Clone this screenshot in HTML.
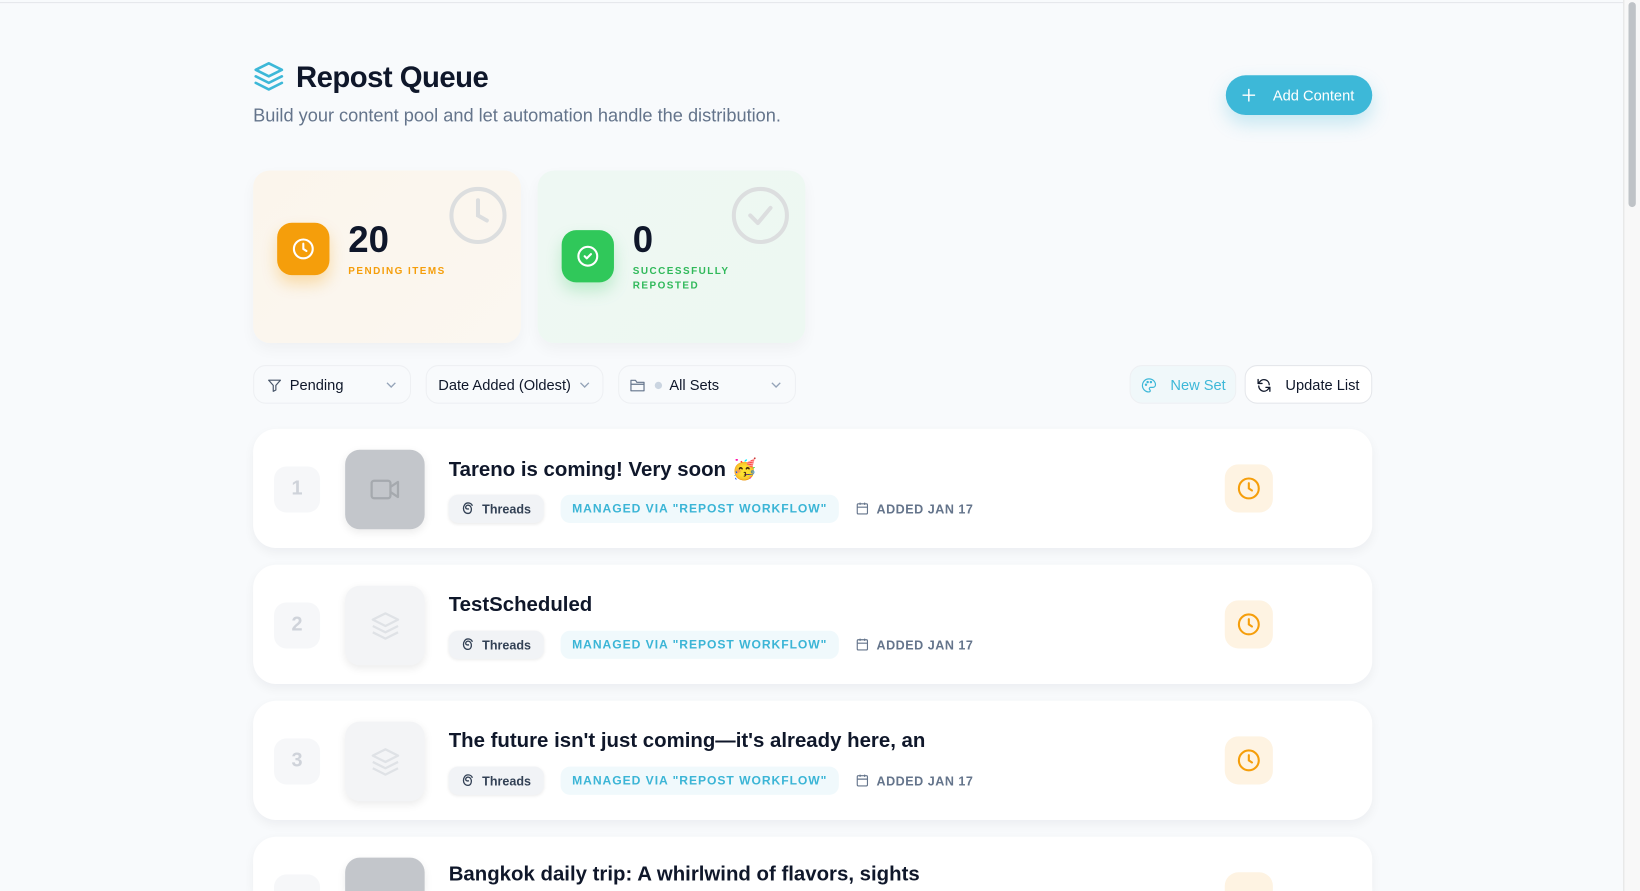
<!DOCTYPE html>
<html><head><meta charset="utf-8">
<style>
*{box-sizing:border-box;margin:0;padding:0}
html,body{width:1640px;height:891px;overflow:hidden;background:#f8fafc;font-family:"Liberation Sans",Arial,sans-serif;color:#0f172a}
#w{position:absolute;left:0;top:0;width:1568px;height:852px;overflow:hidden;transform:scale(1.045918);transform-origin:0 0;background:#f8fafc}
.abs{position:absolute}
.topline{left:0;top:2px;width:1552px;height:1px;background:#e5e7eb}
.sb{left:1552px;top:0;width:16px;height:852px;background:#f8f8f8;border-left:1px solid #e3e3e3}
.sb i{position:absolute;left:4px;top:2px;width:7px;height:196px;border-radius:4px;background:#bfc3c7}
h1{position:absolute;left:283px;top:58px;font-size:28px;font-weight:700;letter-spacing:-0.5px;color:#0f172a}
.sub{left:242px;top:100px;font-size:17.4px;color:#64748b}
.add{left:1172px;top:72px;width:140px;height:38px;border-radius:19px;background:#3db8d8;color:#fff;font-size:14px;box-shadow:0 8px 18px rgba(61,184,216,.28)}
.add span{position:absolute;left:45px;top:11px}
.card{top:163px;width:256px;height:165px;border-radius:16px}
.c1{left:242px;background:linear-gradient(135deg,#fbf5ec,#fbf7f0);box-shadow:0 6px 14px rgba(0,0,0,.04)}
.c2{left:514px;background:linear-gradient(135deg,#eef8f3,#edf8f2);box-shadow:0 6px 14px rgba(0,0,0,.04)}
.ib{width:50px;height:50px;border-radius:14px}
.num{font-size:35px;font-weight:700;color:#0f172a}
.lab{font-size:9.5px;font-weight:700;letter-spacing:1.4px;line-height:14px}
.f{top:349px;height:37px;border-radius:12px;border:1px solid #eef0f3;background:#f8fafc;font-size:14px;color:#0f172a}
.f span{position:absolute;top:10px}
.row{left:242px;width:1070px;height:114px;border-radius:22px;background:#fff;box-shadow:0 4px 10px rgba(15,23,42,.05)}
.no{left:20px;top:36px;width:44px;height:44px;border-radius:12px;background:#f6f7f9;color:#cfd3da;font-size:19px;font-weight:700;text-align:center;line-height:44px}
.th{left:88px;top:20px;width:76px;height:76px;border-radius:14px;box-shadow:0 3px 8px rgba(0,0,0,.08)}
.tt{left:187px;top:27px;font-size:19.5px;font-weight:700;color:#0f172a;white-space:nowrap}
.tg{top:63px;height:27px;border-radius:9px;font-size:12px;font-weight:700;white-space:nowrap}
.t1{left:187px;width:91px;background:#f1f3f6;color:#334155;box-shadow:0 1px 3px rgba(0,0,0,.08)}
.t2{left:294px;width:266px;background:#f0f9fc;color:#3bb5d6;letter-spacing:0.9px;font-size:11.6px}
.t3{left:576px;color:#64748b;letter-spacing:0.5px}
.clk{left:929px;top:34px;width:46px;height:46px;border-radius:13px;background:#fef3e2}
</style></head><body><div id="w">
<div class="abs topline"></div>
<div class="abs sb"><i></i></div>

<svg class="abs" style="left:242px;top:58px" width="30" height="30" viewBox="0 0 24 24" fill="none" stroke="#3db8d8" stroke-width="2" stroke-linejoin="round" stroke-linecap="round"><path d="M12 2 2 7l10 5 10-5-10-5z"/><path d="m2 17 10 5 10-5"/><path d="m2 12 10 5 10-5"/></svg>
<h1>Repost Queue</h1>
<div class="abs sub">Build your content pool and let automation handle the distribution.</div>

<div class="abs add"><svg class="abs" style="left:15px;top:12px" width="14" height="14" viewBox="0 0 14 14" stroke="#fff" stroke-width="1.4"><path d="M7 1v12M1 7h12"/></svg><span>Add Content</span></div>

<div class="abs card c1">
 <svg class="abs" style="left:186px;top:14px" width="58" height="58" viewBox="0 0 24 24" fill="none" stroke="#dcdedf" stroke-width="1.6" stroke-linecap="round"><circle cx="12" cy="12" r="10.5"/><path d="M12 6v6l3.5 2"/></svg>
 <div class="abs ib" style="left:23px;top:50px;background:#f59e0b;box-shadow:0 8px 14px rgba(245,158,11,.3)"><svg class="abs" style="left:13px;top:13px" width="24" height="24" viewBox="0 0 24 24" fill="none" stroke="#fff" stroke-width="2" stroke-linecap="round"><circle cx="12" cy="12" r="9"/><path d="M12 7v5l3 2"/></svg></div>
 <div class="abs num" style="left:91px;top:47px">20</div>
 <div class="abs lab" style="left:91px;top:90px;color:#f59e0b">PENDING ITEMS</div>
</div>
<div class="abs card c2">
 <svg class="abs" style="left:184px;top:14px" width="58" height="58" viewBox="0 0 24 24" fill="none" stroke="#dcdedf" stroke-width="1.6" stroke-linecap="round" stroke-linejoin="round"><circle cx="12" cy="12" r="10.5"/><path d="m8 12 3 3 5-6"/></svg>
 <div class="abs ib" style="left:23px;top:57px;background:#30c85a;box-shadow:0 8px 14px rgba(48,200,90,.25)"><svg class="abs" style="left:13px;top:13px" width="24" height="24" viewBox="0 0 24 24" fill="none" stroke="#fff" stroke-width="2" stroke-linecap="round" stroke-linejoin="round"><circle cx="12" cy="12" r="9"/><path d="m9 12 2 2 4-4"/></svg></div>
 <div class="abs num" style="left:91px;top:47px">0</div>
 <div class="abs lab" style="left:91px;top:90px;color:#30b95a">SUCCESSFULLY<br>REPOSTED</div>
</div>

<div class="abs f" style="left:242px;width:151px"><svg class="abs" style="left:12px;top:11px" width="15" height="15" viewBox="0 0 24 24" fill="none" stroke="#475569" stroke-width="1.8" stroke-linejoin="round"><path d="M3 4h18l-7 8v7l-4 2v-9z"/></svg><span style="left:34px">Pending</span><svg class="abs" style="left:126px;top:14px" width="10" height="8" viewBox="0 0 10 8" fill="none" stroke="#94a3b8" stroke-width="1.3"><path d="m1 2 4 4 4-4"/></svg></div>
<div class="abs f" style="left:407px;width:170px"><span style="left:11px">Date Added (Oldest)</span><svg class="abs" style="left:146px;top:14px" width="10" height="8" viewBox="0 0 10 8" fill="none" stroke="#94a3b8" stroke-width="1.3"><path d="m1 2 4 4 4-4"/></svg></div>
<div class="abs f" style="left:591px;width:170px"><svg class="abs" style="left:10px;top:11px" width="15" height="14" viewBox="0 0 24 22" fill="none" stroke="#64748b" stroke-width="1.8" stroke-linejoin="round"><path d="M2 4h7l2 3h11v13H2z"/><path d="M2 10h20"/></svg><i class="abs" style="left:34px;top:15px;width:7px;height:7px;border-radius:50%;background:#cbd5e1"></i><span style="left:48px">All Sets</span><svg class="abs" style="left:145px;top:14px" width="10" height="8" viewBox="0 0 10 8" fill="none" stroke="#94a3b8" stroke-width="1.3"><path d="m1 2 4 4 4-4"/></svg></div>

<div class="abs f" style="left:1080px;width:102px;background:#f0f8fa;color:#3db8d8"><svg class="abs" style="left:10px;top:11px" width="15" height="15" viewBox="0 0 24 24" fill="none" stroke="#3db8d8" stroke-width="1.8"><path d="M12 2a10 10 0 1 0 0 20c1.5 0 2-1 2-2 0-1.5-1.5-1.5-1.5-3 0-1 1-2 2-2H18a4 4 0 0 0 4-4c0-5-4.5-9-10-9z"/><circle cx="7.5" cy="11" r="1"/><circle cx="10" cy="7" r="1"/><circle cx="15" cy="7" r="1"/></svg><span style="left:38px">New Set</span></div>
<div class="abs f" style="left:1190px;width:122px;background:#fff;border-color:#e5e7eb"><svg class="abs" style="left:10px;top:11px" width="15" height="15" viewBox="0 0 24 24" fill="none" stroke="#0f172a" stroke-width="2" stroke-linecap="round" stroke-linejoin="round"><path d="M20 11A8 8 0 0 0 5.5 6.5L3 9"/><path d="M3 3v6h6"/><path d="M4 13a8 8 0 0 0 14.5 4.5L21 15"/><path d="M21 21v-6h-6"/></svg><span style="left:38px">Update List</span></div>

<div class="abs row" style="top:410px">
 <div class="abs no">1</div>
 <div class="abs th" style="background:#c3c6cb"><svg class="abs" style="left:24px;top:26px" width="29" height="24" viewBox="0 0 24 20" fill="none" stroke="#a5a9ae" stroke-width="1.8" stroke-linejoin="round"><rect x="1" y="3" width="15" height="14" rx="2"/><path d="m16 8 6-4v12l-6-4"/></svg></div>
 <div class="abs tt">Tareno is coming! Very soon 🥳</div>
 <div class="abs tg t1"><svg class="abs" style="left:11px;top:6px" width="15" height="15" viewBox="0 0 24 24" fill="none" stroke="#334155" stroke-width="2"><path d="M17 11c-1-4-4-5-6-4.5-2 .5-3 2.5-2.5 4s2.5 2 5 1.5M17 11c.5 4-1 8-5 8-5 0-7-4-7-7.5S7 3 12 3c3.5 0 6 2 6.5 4.5"/></svg><span class="abs" style="left:32px;top:7px">Threads</span></div>
 <div class="abs tg t2"><span class="abs" style="left:11px;top:7px">MANAGED VIA "REPOST WORKFLOW"</span></div>
 <div class="abs tg t3"><svg class="abs" style="left:0;top:6px" width="13" height="14" viewBox="0 0 24 24" fill="none" stroke="#64748b" stroke-width="2"><rect x="3" y="4" width="18" height="18" rx="2"/><path d="M8 2v4M16 2v4M3 10h18"/></svg><span class="abs" style="left:20px;top:7px">ADDED JAN 17</span></div>
 <div class="abs clk"><svg class="abs" style="left:11px;top:11px" width="24" height="24" viewBox="0 0 24 24" fill="none" stroke="#f59e0b" stroke-width="2" stroke-linecap="round"><circle cx="12" cy="12" r="9.5"/><path d="M12 7v5l3 2"/></svg></div>
</div>

<div class="abs row" style="top:540px">
 <div class="abs no">2</div>
 <div class="abs th" style="background:#f3f4f6"><svg class="abs" style="left:24px;top:24px" width="29" height="29" viewBox="0 0 24 24" fill="none" stroke="#dfe2e6" stroke-width="1.8" stroke-linejoin="round"><path d="M12 2 2 7l10 5 10-5-10-5z"/><path d="m2 17 10 5 10-5"/><path d="m2 12 10 5 10-5"/></svg></div>
 <div class="abs tt">TestScheduled</div>
 <div class="abs tg t1"><svg class="abs" style="left:11px;top:6px" width="15" height="15" viewBox="0 0 24 24" fill="none" stroke="#334155" stroke-width="2"><path d="M17 11c-1-4-4-5-6-4.5-2 .5-3 2.5-2.5 4s2.5 2 5 1.5M17 11c.5 4-1 8-5 8-5 0-7-4-7-7.5S7 3 12 3c3.5 0 6 2 6.5 4.5"/></svg><span class="abs" style="left:32px;top:7px">Threads</span></div>
 <div class="abs tg t2"><span class="abs" style="left:11px;top:7px">MANAGED VIA "REPOST WORKFLOW"</span></div>
 <div class="abs tg t3"><svg class="abs" style="left:0;top:6px" width="13" height="14" viewBox="0 0 24 24" fill="none" stroke="#64748b" stroke-width="2"><rect x="3" y="4" width="18" height="18" rx="2"/><path d="M8 2v4M16 2v4M3 10h18"/></svg><span class="abs" style="left:20px;top:7px">ADDED JAN 17</span></div>
 <div class="abs clk"><svg class="abs" style="left:11px;top:11px" width="24" height="24" viewBox="0 0 24 24" fill="none" stroke="#f59e0b" stroke-width="2" stroke-linecap="round"><circle cx="12" cy="12" r="9.5"/><path d="M12 7v5l3 2"/></svg></div>
</div>

<div class="abs row" style="top:670px">
 <div class="abs no">3</div>
 <div class="abs th" style="background:#f3f4f6"><svg class="abs" style="left:24px;top:24px" width="29" height="29" viewBox="0 0 24 24" fill="none" stroke="#dfe2e6" stroke-width="1.8" stroke-linejoin="round"><path d="M12 2 2 7l10 5 10-5-10-5z"/><path d="m2 17 10 5 10-5"/><path d="m2 12 10 5 10-5"/></svg></div>
 <div class="abs tt">The future isn't just coming—it's already here, an</div>
 <div class="abs tg t1"><svg class="abs" style="left:11px;top:6px" width="15" height="15" viewBox="0 0 24 24" fill="none" stroke="#334155" stroke-width="2"><path d="M17 11c-1-4-4-5-6-4.5-2 .5-3 2.5-2.5 4s2.5 2 5 1.5M17 11c.5 4-1 8-5 8-5 0-7-4-7-7.5S7 3 12 3c3.5 0 6 2 6.5 4.5"/></svg><span class="abs" style="left:32px;top:7px">Threads</span></div>
 <div class="abs tg t2"><span class="abs" style="left:11px;top:7px">MANAGED VIA "REPOST WORKFLOW"</span></div>
 <div class="abs tg t3"><svg class="abs" style="left:0;top:6px" width="13" height="14" viewBox="0 0 24 24" fill="none" stroke="#64748b" stroke-width="2"><rect x="3" y="4" width="18" height="18" rx="2"/><path d="M8 2v4M16 2v4M3 10h18"/></svg><span class="abs" style="left:20px;top:7px">ADDED JAN 17</span></div>
 <div class="abs clk"><svg class="abs" style="left:11px;top:11px" width="24" height="24" viewBox="0 0 24 24" fill="none" stroke="#f59e0b" stroke-width="2" stroke-linecap="round"><circle cx="12" cy="12" r="9.5"/><path d="M12 7v5l3 2"/></svg></div>
</div>

<div class="abs row" style="top:800px;height:52px;border-radius:22px 22px 0 0;overflow:hidden">
 <div class="abs no" style="height:16px;border-radius:12px 12px 0 0"></div>
 <div class="abs th" style="background:#c3c6cb;height:32px;border-radius:14px 14px 0 0"></div>
 <div class="abs tt" style="top:25px">Bangkok daily trip: A whirlwind of flavors, sights</div>
 <div class="abs clk" style="height:18px;border-radius:13px 13px 0 0"></div>
</div>

</div></body></html>
